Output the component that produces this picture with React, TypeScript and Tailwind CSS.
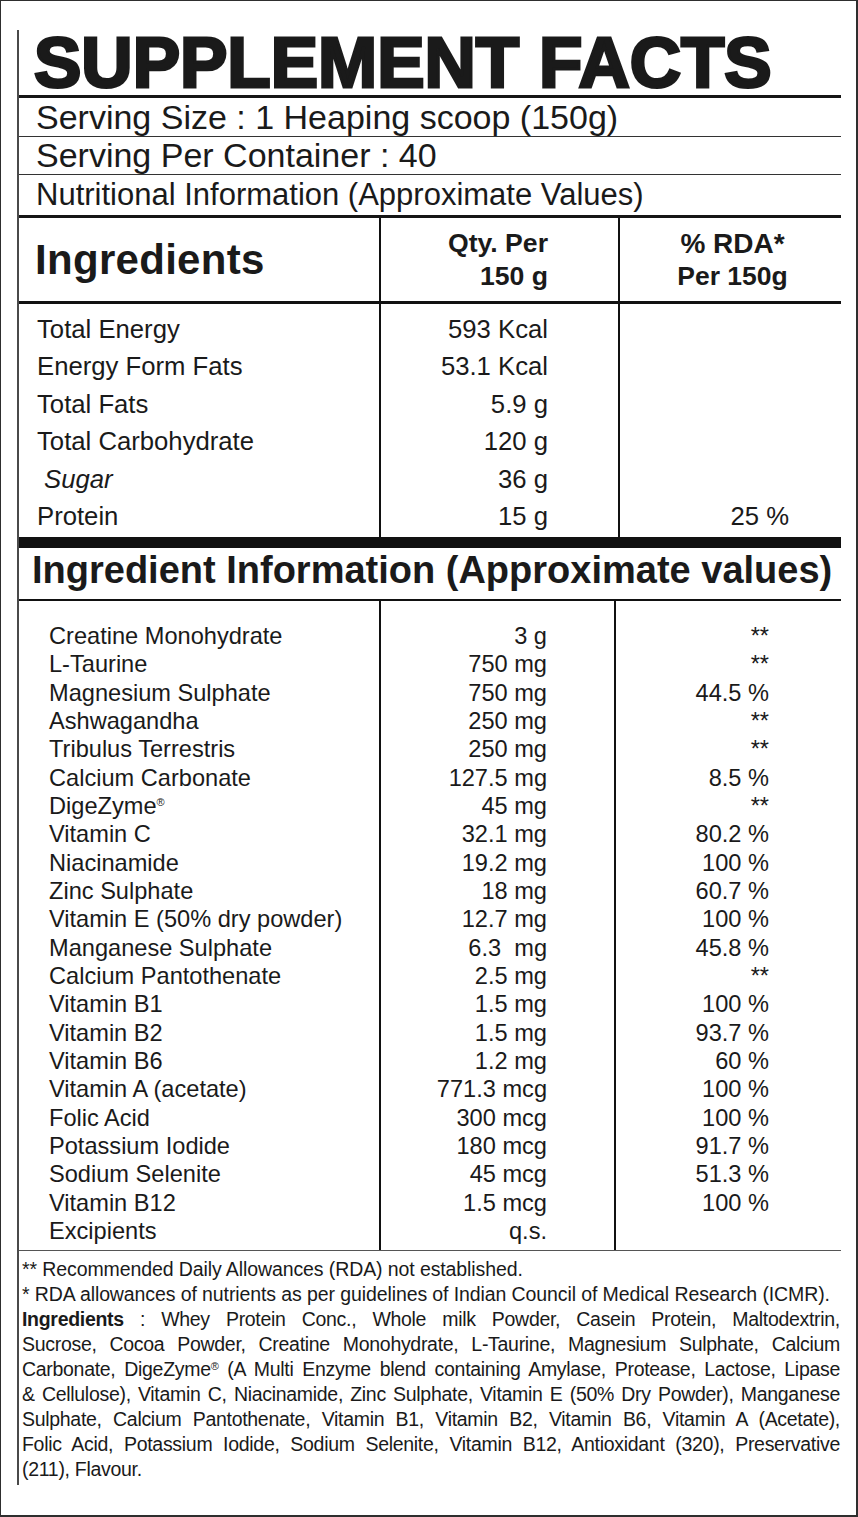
const mainRows = [
  { name: "Total Energy", qty: "593 Kcal", rda: "" },
  { name: "Energy Form Fats", qty: "53.1 Kcal", rda: "" },
  { name: "Total Fats", qty: "5.9 g", rda: "" },
  { name: "Total Carbohydrate", qty: "120 g", rda: "" },
  { name: "Sugar", qty: "36 g", rda: "", italic: true },
  { name: "Protein", qty: "15 g", rda: "25 %" },
]

const infoRows = [
  { name: "Creatine Monohydrate", qty: "3 g", rda: "**" },
  { name: "L-Taurine", qty: "750 mg", rda: "**" },
  { name: "Magnesium Sulphate", qty: "750 mg", rda: "44.5 %" },
  { name: "Ashwagandha", qty: "250 mg", rda: "**" },
  { name: "Tribulus Terrestris", qty: "250 mg", rda: "**" },
  { name: "Calcium Carbonate", qty: "127.5 mg", rda: "8.5 %" },
  { name: "DigeZyme", reg: true, qty: "45 mg", rda: "**" },
  { name: "Vitamin C", qty: "32.1 mg", rda: "80.2 %" },
  { name: "Niacinamide", qty: "19.2 mg", rda: "100 %" },
  { name: "Zinc Sulphate", qty: "18 mg", rda: "60.7 %" },
  { name: "Vitamin E (50% dry powder)", qty: "12.7 mg", rda: "100 %" },
  { name: "Manganese Sulphate", qty: "6.3  mg", rda: "45.8 %" },
  { name: "Calcium Pantothenate", qty: "2.5 mg", rda: "**" },
  { name: "Vitamin B1", qty: "1.5 mg", rda: "100 %" },
  { name: "Vitamin B2", qty: "1.5 mg", rda: "93.7 %" },
  { name: "Vitamin B6", qty: "1.2 mg", rda: "60 %" },
  { name: "Vitamin A (acetate)", qty: "771.3 mcg", rda: "100 %" },
  { name: "Folic Acid", qty: "300 mcg", rda: "100 %" },
  { name: "Potassium Iodide", qty: "180 mcg", rda: "91.7 %" },
  { name: "Sodium Selenite", qty: "45 mcg", rda: "51.3 %" },
  { name: "Vitamin B12", qty: "1.5 mcg", rda: "100 %" },
  { name: "Excipients", qty: "q.s.", rda: "" },
]

// small registered mark that sits up at cap height
const Reg = ({ top = "top-[4px]" }: { top?: string }) => (
  <span className={`inline-block align-top text-[11px] leading-none relative ${top}`}>®</span>
)

const ingredientLines = [
  <>
    <b>Ingredients</b> : Whey Protein Conc., Whole milk Powder, Casein Protein, Maltodextrin,
  </>,
  <>Sucrose, Cocoa Powder, Creatine Monohydrate, L-Taurine, Magnesium Sulphate, Calcium</>,
  <>
    Carbonate, DigeZyme
    <Reg top="top-[4px]" /> (A Multi Enzyme blend containing Amylase, Protease, Lactose, Lipase
  </>,
  <>&amp; Cellulose), Vitamin C, Niacinamide, Zinc Sulphate, Vitamin E (50% Dry Powder), Manganese</>,
  <>Sulphate, Calcium Pantothenate, Vitamin B1, Vitamin B2, Vitamin B6, Vitamin A (Acetate),</>,
  <>Folic Acid, Potassium Iodide, Sodium Selenite, Vitamin B12, Antioxidant (320), Preservative</>,
]

export default function App() {
  return (
    <div className="w-[858px] h-[1517px] bg-white border-t border-l border-r-2 border-b-2 border-[#2e2e2e] pt-[29px] pl-[16px] font-['Liberation_Sans',Arial,sans-serif] text-[#1a1a1a]">
      <div className="w-[824px] border-l-2 border-[#4a4a4a]">
        {/* title */}
        <div className="h-[68px] border-b-[3px] border-[#151515] pl-[15px]">
          <h1 className="text-[71px] leading-[65px] font-bold whitespace-nowrap [-webkit-text-stroke:3px_#1a1a1a]">
            SUPPLEMENT FACTS
          </h1>
        </div>

        <div className="h-[38.5px] border-b-[1.5px] border-[#333] pl-[17px] flex items-center text-[34px] leading-none whitespace-nowrap">
          Serving Size : 1 Heaping scoop (150g)
        </div>
        <div className="h-[38px] border-b-[1.5px] border-[#333] pl-[17px] flex items-center text-[34px] leading-none whitespace-nowrap">
          Serving Per Container : 40
        </div>
        <div className="h-[43.5px] border-b-[3px] border-[#151515] pl-[17px] flex items-center text-[31px] leading-none whitespace-nowrap">
          Nutritional Information (Approximate Values)
        </div>

        {/* nutrition table */}
        <div className="grid grid-cols-[362px_239px_1fr]">
          <div className="h-[86px] border-b-[3px] border-r-2 border-[#111] pl-[16px] flex items-center">
            <span className="text-[42px] font-bold tracking-[0.3px] leading-none">Ingredients</span>
          </div>
          <div className="h-[86px] border-b-[3px] border-r-2 border-[#111] pr-[70px] flex flex-col justify-center items-end font-bold leading-[33px] text-[26.6px]">
            <span>Qty. Per</span>
            <span>150 g</span>
          </div>
          <div className="h-[86px] border-b-[3px] border-[#111] flex flex-col justify-center items-center font-bold leading-[32px] pl-[4px]">
            <span className="text-[28px]">% RDA*</span>
            <span className="text-[26.5px]">Per 150g</span>
          </div>

          <div className="h-[233px] border-r-2 border-[#111] pt-[7px] pl-[18px] text-[25.7px] leading-[37.4px]">
            {mainRows.map((r) => (
              <div key={r.name} className={r.italic ? "italic pl-[7px]" : ""}>
                {r.name}
              </div>
            ))}
          </div>
          <div className="h-[233px] border-r-2 border-[#111] pt-[7px] pr-[70px] text-right text-[25.7px] leading-[37.4px]">
            {mainRows.map((r) => (
              <div key={r.name}>{r.qty}</div>
            ))}
          </div>
          <div className="h-[233px] pt-[7px] pr-[52px] text-right text-[25.7px] leading-[37.4px]">
            {mainRows.map((r) => (
              <div key={r.name}>{r.rda || "\u00a0"}</div>
            ))}
          </div>
        </div>

        {/* ingredient information heading */}
        <div className="h-[64px] border-t-[11px] border-b-2 border-[#111] pl-[13px]">
          <h2 className="text-[38px] font-bold leading-[44px] whitespace-nowrap">
            Ingredient Information (Approximate values)
          </h2>
        </div>

        <div className="grid grid-cols-[362px_235px_1fr] border-b-[1.5px] border-[#555] text-[23.6px] leading-[28.33px]">
          <div className="h-[649px] border-r-2 border-[#111] pt-[21px] pl-[30px]">
            {infoRows.map((r) => (
              <div key={r.name} className="whitespace-nowrap">
                {r.name}
                {r.reg && <Reg top="top-[5px]" />}
              </div>
            ))}
          </div>
          <div className="h-[649px] border-r-2 border-[#111] pt-[21px] pr-[67px] text-right">
            {infoRows.map((r) => (
              <div key={r.name} className="whitespace-pre">
                {r.qty}
              </div>
            ))}
          </div>
          <div className="h-[649px] pt-[21px] pr-[72px] text-right">
            {infoRows.map((r) => (
              <div key={r.name}>{r.rda || "\u00a0"}</div>
            ))}
          </div>
        </div>

        {/* footnotes */}
        <div className="pt-[6px] pb-[3px] pl-[3px] pr-[1px] text-[19.5px] leading-[25px]">
          <div className="tracking-[-0.1px] whitespace-nowrap">** Recommended Daily Allowances (RDA) not established.</div>
          <div className="tracking-[-0.1px] whitespace-nowrap">
            * RDA allowances of nutrients as per guidelines of Indian Council of Medical Research (ICMR).
          </div>
          {ingredientLines.map((line, i) => (
            <div key={i} className="text-justify [text-align-last:justify] tracking-[-0.3px]">
              {line}
            </div>
          ))}
          <div className="tracking-[-0.3px]">(211), Flavour.</div>
        </div>
      </div>
    </div>
  )
}
